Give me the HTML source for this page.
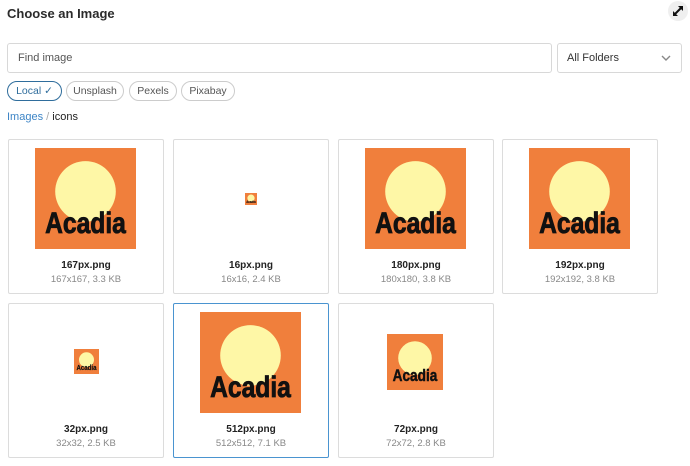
<!DOCTYPE html>
<html><head><meta charset="utf-8"><style>
*{box-sizing:border-box;margin:0;padding:0}
body{width:690px;height:466px;background:#fff;font-family:"Liberation Sans",sans-serif;position:relative;overflow:hidden;color:#222}
.abs{position:absolute}
h1{position:absolute;left:7px;top:6px;font-size:13px;font-weight:bold;color:#2b2b2b}
.exp{left:668px;top:1px;width:20px;height:20px;border-radius:50%;background:#efefef}
.search{left:7px;top:43px;width:545px;height:30px;border:1px solid #d8d8d8;border-radius:3px;font-size:11px;color:#555;padding:8px 10px}
.sel{left:557px;top:43px;width:125px;height:30px;border:1px solid #d8d8d8;border-radius:3px;font-size:11px;color:#333;padding:8px 9px}
.pill{top:81px;height:20px;border:1px solid #ccc;border-radius:10px;font-size:10.5px;color:#555;line-height:18px;text-align:center}
.bc{left:7px;top:111px;font-size:11px;color:#222}
.card{width:156px;height:155px;border:1px solid #dcdcdc;border-radius:2px;background:#fff}
.card .n{position:absolute;top:120px;width:100%;text-align:center;font-size:10px;font-weight:bold;color:#222}
.card .i{position:absolute;top:134px;width:100%;text-align:center;font-size:9.5px;color:#888}
svg{position:absolute}
</style></head><body>
<h1>Choose an Image</h1>
<div class="abs exp"><svg width="20" height="20" viewBox="0 0 20 20"><path d="M5 10v5h5zM15 10V5h-5z" fill="#111"/><path d="M7 13l6-6" stroke="#111" stroke-width="2"/></svg></div>
<div class="abs search">Find image</div>
<div class="abs sel">All Folders<svg style="right:10px;top:11px" width="10" height="7" viewBox="0 0 10 7"><path d="M1 1l4 4 4-4" fill="none" stroke="#888" stroke-width="1.4"/></svg></div>
<div class="abs pill" style="left:7px;width:55px;border-color:#2f6d9c;color:#2f6d9c">Local ✓</div>
<div class="abs pill" style="left:66px;width:58px">Unsplash</div>
<div class="abs pill" style="left:129px;width:48px">Pexels</div>
<div class="abs pill" style="left:181px;width:54px">Pixabay</div>
<div class="abs bc"><span style="color:#3d85c6">Images</span> <span style="color:#aaa">/</span> icons</div>

<svg width="0" height="0"><defs><symbol id="lg" viewBox="0 0 100 100"><rect width="100" height="100" fill="#F07F3C"/><circle cx="50" cy="43" r="30" fill="#FEF7A6"/><text x="50" y="84" text-anchor="middle" font-family="Liberation Sans,sans-serif" font-weight="bold" font-size="29" fill="#111" stroke="#111" stroke-width="0.8" textLength="80" lengthAdjust="spacingAndGlyphs">Acadia</text></symbol></defs></svg>

<div class="abs card" style="left:8px;top:139px"><svg style="left:26px;top:8px" width="101" height="101"><use href="#lg"/></svg><div class="n">167px.png</div><div class="i">167x167, 3.3 KB</div></div>
<div class="abs card" style="left:173px;top:139px"><svg style="left:71px;top:53px" width="12" height="12"><use href="#lg"/></svg><div class="n">16px.png</div><div class="i">16x16, 2.4 KB</div></div>
<div class="abs card" style="left:338px;top:139px"><svg style="left:26px;top:8px" width="101" height="101"><use href="#lg"/></svg><div class="n">180px.png</div><div class="i">180x180, 3.8 KB</div></div>
<div class="abs card" style="left:502px;top:139px"><svg style="left:26px;top:8px" width="101" height="101"><use href="#lg"/></svg><div class="n">192px.png</div><div class="i">192x192, 3.8 KB</div></div>

<div class="abs card" style="left:8px;top:303px"><svg style="left:65px;top:45px" width="25" height="25"><use href="#lg"/></svg><div class="n">32px.png</div><div class="i">32x32, 2.5 KB</div></div>
<div class="abs card" style="left:173px;top:303px;border-color:#4a94d0"><svg style="left:26px;top:8px" width="101" height="101"><use href="#lg"/></svg><div class="n">512px.png</div><div class="i">512x512, 7.1 KB</div></div>
<div class="abs card" style="left:338px;top:303px"><svg style="left:48px;top:30px" width="56" height="56"><use href="#lg"/></svg><div class="n">72px.png</div><div class="i">72x72, 2.8 KB</div></div>
</body></html>
